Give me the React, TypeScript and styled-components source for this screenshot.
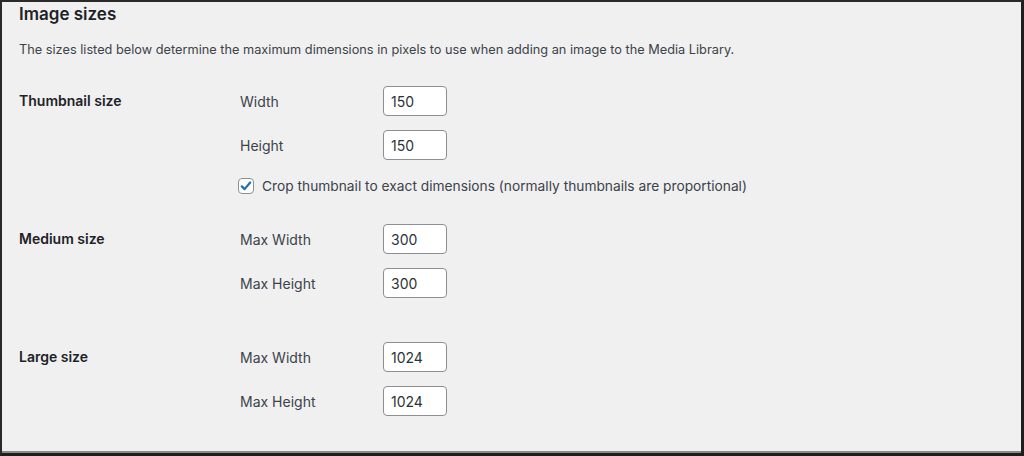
import React from "react";
import styled, { createGlobalStyle } from "styled-components";

const Global = createGlobalStyle`
  html, body { margin: 0; padding: 0; background: #1a1a1a; }
  body { font-family: Inter, "Noto Sans", sans-serif; }
`;

const Frame = styled.div`
  box-sizing: border-box;
  width: 1024px;
  height: 456px;
  border-top: 2px solid #2a2a2a;
  border-left: 2px solid #2a2a2a;
  border-right: 3px solid #1e1e1e;
  border-bottom: 3px solid #1e1e1e;
  background: #f0f0f0;
  overflow: hidden;
`;

const Inner = styled.div`
  box-sizing: border-box;
  height: 100%;
  padding: 0 0 0 17px;
  border-bottom: 2px solid #8a8a8a;
`;

const Title = styled.h2`
  margin: 0;
  font-size: 17px;
  font-weight: 600;
  color: #1d2327;
  line-height: 24px;
`;

const Description = styled.p`
  margin: 14px 0 0;
  font-size: 12.75px;
  color: #3c434a;
  line-height: 20px;
`;

const Row = styled.div<{ $top: number }>`
  display: grid;
  grid-template-columns: 221px 1fr;
  margin-top: ${(p) => p.$top}px;
`;

const RowLabel = styled.div`
  font-size: 14px;
  font-weight: 600;
  color: #1d2327;
  line-height: 30px;
`;

const Fields = styled.div`
  display: flex;
  flex-direction: column;
  gap: 14px;
`;

const Field = styled.label`
  display: grid;
  grid-template-columns: 143px 64px;
  align-items: center;
  font-size: 14px;
  color: #3c434a;
`;

const NumberInput = styled.input`
  box-sizing: border-box;
  width: 64px;
  height: 30px;
  border: 1px solid #8c8f94;
  border-radius: 4px;
  background: #fff;
  padding: 0 7px;
  font-family: inherit;
  font-size: 14px;
  color: #2c3338;
  outline: none;
`;

const CheckRow = styled.label`
  display: flex;
  align-items: center;
  gap: 8px;
  margin-top: 4px;
  margin-left: -2px;
  font-size: 13.75px;
  color: #3c434a;
`;

const Box = styled.span`
  box-sizing: border-box;
  width: 16px;
  height: 16px;
  border: 1px solid #8c8f94;
  border-radius: 4px;
  background: #fff;
  display: flex;
  align-items: center;
  justify-content: center;
`;

function Check() {
  return (
    <Box>
      <svg width="14" height="14" viewBox="0 0 20 20">
        <path d="M4 10.5 L8 14.5 L16 5" fill="none" stroke="#2271b1" strokeWidth="3.2" strokeLinecap="round" strokeLinejoin="round" />
      </svg>
    </Box>
  );
}

export default function App() {
  return (
    <>
      <Global />
      <Frame>
        <Inner>
          <Title>Image sizes</Title>
          <Description>
            The sizes listed below determine the maximum dimensions in pixels to use when adding an image to the Media Library.
          </Description>
          <Row $top={26}>
            <RowLabel>Thumbnail size</RowLabel>
            <Fields>
              <Field>Width<NumberInput defaultValue="150" /></Field>
              <Field>Height<NumberInput defaultValue="150" /></Field>
              <CheckRow>
                <Check />
                Crop thumbnail to exact dimensions (normally thumbnails are proportional)
              </CheckRow>
            </Fields>
          </Row>
          <Row $top={30}>
            <RowLabel>Medium size</RowLabel>
            <Fields>
              <Field>Max Width<NumberInput defaultValue="300" /></Field>
              <Field>Max Height<NumberInput defaultValue="300" /></Field>
            </Fields>
          </Row>
          <Row $top={44}>
            <RowLabel>Large size</RowLabel>
            <Fields>
              <Field>Max Width<NumberInput defaultValue="1024" /></Field>
              <Field>Max Height<NumberInput defaultValue="1024" /></Field>
            </Fields>
          </Row>
        </Inner>
      </Frame>
    </>
  );
}
